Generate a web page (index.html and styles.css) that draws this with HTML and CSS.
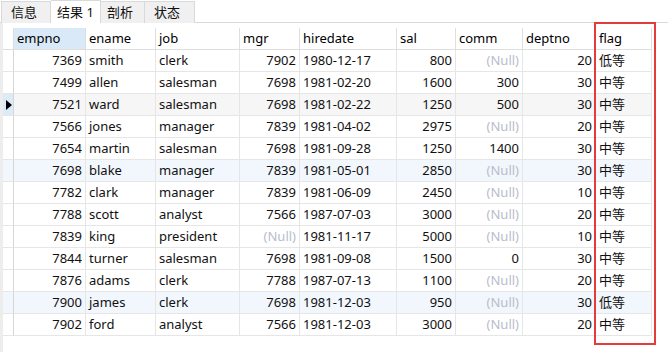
FILE: index.html
```html
<!DOCTYPE html>
<html lang="zh-CN">
<head>
  <meta charset="UTF-8">
  <title>结果 1</title>
  <link rel="stylesheet" href="styles.css">
</head>
<body>

  <!-- TABS -->
  <div class="tabs">
    <span class="tab">信息</span>
    <span class="tab active">结果 1</span>
    <span class="tab">剖析</span>
    <span class="tab">状态</span>
  </div>

  <!-- RESULT GRID -->
  <div class="result">
    <div class="side-strip"></div>
    <div class="grid" id="grid">
      <div class="row head">
        <div class="cell gutter"></div>
        <div class="cell sorted">empno</div>
        <div class="cell">ename</div>
        <div class="cell">job</div>
        <div class="cell">mgr</div>
        <div class="cell">hiredate</div>
        <div class="cell">sal</div>
        <div class="cell">comm</div>
        <div class="cell">deptno</div>
        <div class="cell">flag</div>
      </div>
    </div>

    <!-- highlight box round the flag column -->
    <div class="flag-mark"></div>
  </div>

  <script>
    const rows = [
      ['7369', 'smith',  'clerk',     '7902', '1980-12-17', '800',  null,   '20', '低等'],
      ['7499', 'allen',  'salesman',  '7698', '1981-02-20', '1600', '300',  '30', '中等'],
      ['7521', 'ward',   'salesman',  '7698', '1981-02-22', '1250', '500',  '30', '中等'],
      ['7566', 'jones',  'manager',   '7839', '1981-04-02', '2975', null,   '20', '中等'],
      ['7654', 'martin', 'salesman',  '7698', '1981-09-28', '1250', '1400', '30', '中等'],
      ['7698', 'blake',  'manager',   '7839', '1981-05-01', '2850', null,   '30', '中等'],
      ['7782', 'clark',  'manager',   '7839', '1981-06-09', '2450', null,   '10', '中等'],
      ['7788', 'scott',  'analyst',   '7566', '1987-07-03', '3000', null,   '20', '中等'],
      ['7839', 'king',   'president', null,   '1981-11-17', '5000', null,   '10', '中等'],
      ['7844', 'turner', 'salesman',  '7698', '1981-09-08', '1500', '0',    '30', '中等'],
      ['7876', 'adams',  'clerk',     '7788', '1987-07-13', '1100', null,   '20', '中等'],
      ['7900', 'james',  'clerk',     '7698', '1981-12-03', '950',  null,   '30', '低等'],
      ['7902', 'ford',   'analyst',   '7566', '1981-12-03', '3000', null,   '20', '中等']
    ];
    // numeric columns are right aligned
    const numeric = [true, false, false, true, false, true, true, true, false];
    const currentRow = 2;
    const tinted = [5, 11];

    const grid = document.getElementById('grid');
    rows.forEach((r, i) => {
      const row = document.createElement('div');
      row.className = 'row';
      if (i === currentRow) row.classList.add('current');
      if (tinted.includes(i)) row.classList.add('tint');

      const g = document.createElement('div');
      g.className = 'cell gutter';
      if (i === currentRow) g.innerHTML = '<span class="marker"></span>';
      row.appendChild(g);

      r.forEach((v, c) => {
        const cell = document.createElement('div');
        cell.className = 'cell' + (numeric[c] ? ' num' : '');
        if (v === null) {
          cell.classList.add('null');
          cell.textContent = '(Null)';
        } else {
          cell.textContent = v;
        }
        row.appendChild(cell);
      });
      grid.appendChild(row);
    });
  </script>
</body>
</html>
```

FILE: styles.css
```css
/* ------------------------------
   BASIC STYLES
------------------------------ */
* {
  box-sizing: border-box;
  margin: 0;
  padding: 0;
}

body {
  font-family: "Noto Sans", "Noto Sans CJK SC", sans-serif;
  font-size: 13px;
  color: #111;
  background: #fff;
  width: 668px;
  height: 352px;
  overflow: hidden;
}

/* ------------------------------
   TABS
------------------------------ */
.tabs {
  display: flex;
  height: 23px;
  padding-left: 1px;
  border-bottom: 1px solid #d9d9d9;
}

.tab {
  width: 50px;
  height: 22px;
  margin-top: 1px;
  padding-left: 9px;
  line-height: 21px;
  background: #f0f0f0;
  border: 1px solid #d9d9d9;
  border-bottom: none;
  border-left: none;
}

.tab:first-child {
  border-left: 1px solid #d9d9d9;
}

.tab.active {
  background: #fff;
  height: 23px;
  margin-top: 0;
  margin-bottom: -1px;
  padding-left: 6px;
  line-height: 22px;
}

.tab.active + .tab {
  width: 44px;
  padding-left: 6px;
}

/* ------------------------------
   RESULT GRID
------------------------------ */
.result {
  position: relative;
  display: flex;
  height: 329px;
}

.side-strip {
  width: 3px;
  background: #ededed;
}

.grid {
  padding-top: 5px;
}

.row {
  display: grid;
  grid-template-columns: 11px 72px 70px 84px 60px 97px 59px 67px 73px 56px;
  height: 22px;
}

.cell {
  padding: 0 3px;
  line-height: 21px;
  white-space: nowrap;
  overflow: hidden;
  border-right: 1px solid #e6e6e6;
  border-bottom: 1px solid #e6e6e6;
}

.cell.num {
  text-align: right;
}

.cell.null {
  color: #b7bdcb;
}

.cell.gutter {
  padding: 0;
  border-right-color: #d6d6d6;
  display: flex;
  align-items: center;
}

.head .cell {
  color: #000;
  border-right-color: #dedede;
  border-bottom-color: #dedede;
}

.head .cell.sorted {
  background: #d9e9f8;
}

.row.tint {
  background: #f2f7fd;
}

.row.current {
  background: #f6f6f6;
}

.row.current .gutter {
  background: #dcebf8;
}

.marker {
  margin-left: 3px;
  width: 0;
  height: 0;
  border-top: 5px solid transparent;
  border-bottom: 5px solid transparent;
  border-left: 6px solid #000;
}

/* red frame over the flag column */
.flag-mark {
  position: absolute;
  left: 594px;
  top: -1px;
  width: 62px;
  height: 323px;
  border: 2px solid #e63b3b;
}
```
